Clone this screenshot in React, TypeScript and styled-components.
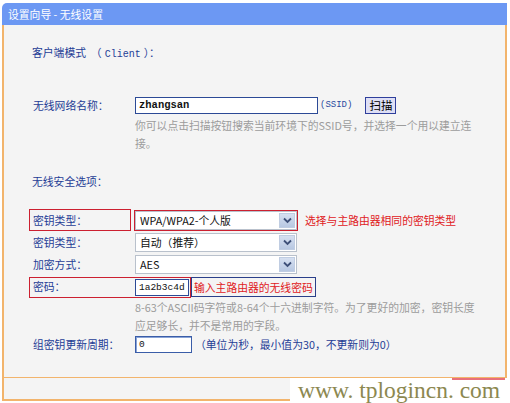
import React from "react";
import styled, { createGlobalStyle } from "styled-components";

const GlobalStyle = createGlobalStyle`
  body {
    margin: 0;
    background: #fff;
    font-family: "Noto Sans CJK SC", sans-serif;
    font-size: 10.8px;
  }
`;

const navy = "#1f3d96";

const Page = styled.div`
  position: relative;
  width: 510px;
  height: 403px;
  overflow: hidden;
`;

const Panel = styled.div`
  margin: 3px 0 0 2px;
  width: 505px;
  box-sizing: border-box;
`;

const TitleBar = styled.div`
  height: 22px;
  background: #6c98f3;
  border-top-left-radius: 5px;
  color: #fff;
  line-height: 22px;
  padding-left: 6px;
`;

const Body = styled.div`
  background: #f4f4f4;
  border-left: 2px solid #f2b46c;
  border-right: 2px solid #f2b46c;
  padding: 18px 0 23px 25px;
`;

const Footer = styled.div`
  height: 21px;
  background: #f4f4f4;
  border: 2px solid #f2b46c;
  border-top-width: 1px;
`;

const Heading = styled.div<{ $top?: number }>`
  color: ${navy};
  line-height: 18px;
  padding-left: 3px;
  margin-top: ${(p) => p.$top ?? 0}px;
  white-space: pre;
`;

const Mono = styled.span`
  font-family: "Liberation Mono", monospace;
  font-size: 10px;
  margin: 0 3px;
`;

const Row = styled.div<{ $h?: number; $top?: number }>`
  display: flex;
  align-items: center;
  height: ${(p) => p.$h ?? 22}px;
  margin-top: ${(p) => p.$top ?? 0}px;
`;

const Label = styled.div<{ $marked?: boolean }>`
  box-sizing: border-box;
  padding-left: 3px;
  color: ${navy};
  height: 22px;
  line-height: 20px;
  border: 1px solid ${(p) => (p.$marked ? "#cc2030" : "transparent")};
  width: ${(p) => (p.$marked ? 102 : 106)}px;
  margin-right: ${(p) => (p.$marked ? 4 : 0)}px;
`;

const Marked = styled.div`
  display: flex;
  align-items: center;
  height: 21px;
  border: 1px solid #cc2030;
  box-sizing: border-box;
  width: 162px;
  & > div:first-child {
    border: none;
    width: 105px;
  }
`;

const TextInput = styled.div<{ $w: number; $focus?: boolean }>`
  width: ${(p) => p.$w}px;
  height: 17px;
  box-sizing: border-box;
  background: #fff;
  border: 1px solid ${(p) => (p.$focus ? "#3a5da8" : "#2c4a96")};
  box-shadow: ${(p) => (p.$focus ? "inset 1px 1px 0 #8aa4d6" : "none")};
  font-family: "Liberation Mono", "Noto Sans CJK SC", monospace;
  font-size: ${(p) => (p.$w < 100 ? 9.5 : 10.5)}px;
  font-weight: ${(p) => (p.$w < 100 ? 400 : 600)};
  line-height: 15px;
  padding-left: 3px;
  color: #111;
  white-space: nowrap;
  overflow: hidden;
`;

const SsidTag = styled.span`
  font-family: "Liberation Mono", monospace;
  font-size: 9px;
  color: #2a4aa0;
  margin-left: 2px;
`;

const ScanButton = styled.div`
  margin-left: 13px;
  width: 31px;
  height: 17px;
  box-sizing: border-box;
  background: #dedff5;
  border: 1px solid #2f3f9c;
  text-align: center;
  line-height: 15px;
  color: #000;
  font-size: 11.5px;
`;

const Help = styled.div<{ $top?: number }>`
  color: #9c9c9c;
  line-height: 18px;
  padding-left: 106px;
  width: 345px;
  margin-top: ${(p) => p.$top ?? 0}px;
`;

const SelectBox = styled.div<{ $marked?: boolean }>`
  width: 164px;
  height: 21px;
  box-sizing: border-box;
  border: 1px solid ${(p) => (p.$marked ? "#cc2030" : "transparent")};
  margin-left: -1px;
`;

const SelectInner = styled.div`
  display: flex;
  height: 19px;
  background: #fff;
  border: 1px solid #b9c1cc;
  box-sizing: border-box;
`;

const SelectText = styled.div`
  flex: 1;
  line-height: 17px;
  padding-left: 4px;
  color: #111;
`;

const Arrow = styled.div`
  width: 16px;
  margin: 1px;
  background: linear-gradient(#d6e0f1, #b8c8e2);
  border: 1px solid #c0cde2;
  box-sizing: border-box;
  display: flex;
  align-items: center;
  justify-content: center;
`;

const Note = styled.div<{ $boxed?: boolean }>`
  color: #e0201c;
  margin-left: ${(p) => (p.$boxed ? 0 : 4)}px;
  padding: 0 2px;
  height: 20px;
  line-height: 19px;
  box-sizing: border-box;
  border: 1px solid ${(p) => (p.$boxed ? "#2a3f8a" : "transparent")};
`;

const Hint = styled.div`
  color: ${navy};
  margin-left: 3px;
`;

const Watermark = styled.div`
  position: absolute;
  left: 290px;
  top: 378px;
  width: 220px;
  height: 25px;
  background: #fff;
  font-family: "Liberation Serif", serif;
  font-size: 23.5px;
  line-height: 25px;
  color: #8c8850;
  padding-left: 8px;
  box-sizing: border-box;
  &::before {
    content: "";
    position: absolute;
    left: 162px;
    top: 0;
    width: 53px;
    height: 2px;
    background: #e8707a;
  }
`;

const Chevron = () => (
  <svg width="9" height="7" viewBox="0 0 9 7">
    <path d="M1 1.5 L4.5 5 L8 1.5" fill="none" stroke="#3d4f78" strokeWidth="1.8" />
  </svg>
);

const Select: React.FC<{ value: string; marked?: boolean }> = ({ value, marked }) => (
  <SelectBox $marked={marked}>
    <SelectInner>
      <SelectText>{value}</SelectText>
      <Arrow>
        <Chevron />
      </Arrow>
    </SelectInner>
  </SelectBox>
);

export default function App() {
  return (
    <Page>
      <GlobalStyle />
      <Panel>
        <TitleBar>设置向导 - 无线设置</TitleBar>
        <Body>
          <Heading>
            {"客户端模式  （"}
            <Mono>Client</Mono>
            {"）："}
          </Heading>

          <Row $h={20} $top={31}>
            <Label>无线网络名称：</Label>
            <TextInput $w={183}>zhangsan</TextInput>
            <SsidTag>(SSID)</SsidTag>
            <ScanButton>扫描</ScanButton>
          </Row>
          <Help $top={1}>
            你可以点击扫描按钮搜索当前环境下的SSID号，并选择一个用以建立连接。
          </Help>

          <Heading $top={20}>无线安全选项：</Heading>

          <Row $top={19}>
            <Label $marked>密钥类型：</Label>
            <Select value="WPA/WPA2-个人版" marked />
            <Note>选择与主路由器相同的密钥类型</Note>
          </Row>
          <Row>
            <Label>密钥类型：</Label>
            <Select value="自动（推荐）" />
          </Row>
          <Row>
            <Label>加密方式：</Label>
            <Select value="AES" />
          </Row>
          <Row $top={1}>
            <Marked>
              <Label>密码：</Label>
              <TextInput $w={54}>1a2b3c4d</TextInput>
            </Marked>
            <Note $boxed>输入主路由器的无线密码</Note>
          </Row>
          <Help>
            8-63个ASCII码字符或8-64个十六进制字符。为了更好的加密，密钥长度应足够长，并不是常用的字段。
          </Help>

          <Row $h={20}>
            <Label>组密钥更新周期：</Label>
            <TextInput $w={57} $focus>
              0
            </TextInput>
            <Hint>（单位为秒，最小值为30，不更新则为0）</Hint>
          </Row>
        </Body>
        <Footer />
      </Panel>
      <Watermark>www. tplogincn. com</Watermark>
    </Page>
  );
}
